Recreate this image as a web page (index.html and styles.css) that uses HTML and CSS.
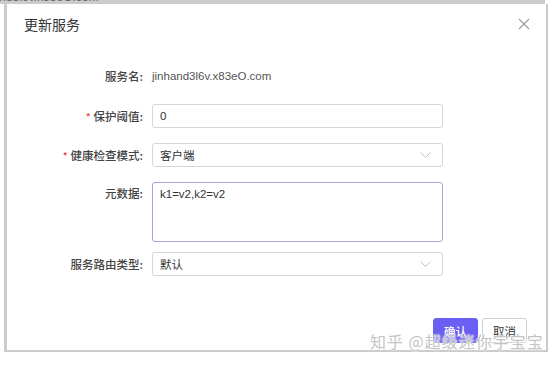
FILE: index.html
```
<!DOCTYPE html>
<html lang="zh-CN">
  <head>
    <meta charset="UTF-8" />
    <meta name="viewport" content="width=device-width, initial-scale=1.0" />
    <title>更新服务</title>
    <link rel="stylesheet" href="styles.css">
  </head>
  <body>
    <div class="shade-top"><span>jinhand3l6v.x83eO.com</span></div>
    <div class="frame">
      <div class="dialog">
        <div class="dialog-header">
          <span class="dialog-title">更新服务</span>
          <svg class="close" width="12" height="12" viewBox="0 0 12 12">
            <path d="M1 1L11 11M11 1L1 11" stroke="#9a9a9a" stroke-width="1.1" fill="none" />
          </svg>
        </div>

        <form class="form">
          <div class="row row-name">
            <label>服务名:</label>
            <span class="value">jinhand3l6v.x83eO.com</span>
          </div>

          <div class="row row-threshold">
            <label><i>*</i>保护阈值:</label>
            <input type="text" value="0" />
          </div>

          <div class="row row-check">
            <label><i>*</i>健康检查模式:</label>
            <div class="select">
              <span>客户端</span>
              <svg width="11" height="6" viewBox="0 0 11 6">
                <path d="M0.5 0.5L5.5 5.5L10.5 0.5" stroke="#bdbdbd" stroke-width="1" fill="none" />
              </svg>
            </div>
          </div>

          <div class="row row-meta">
            <label>元数据:</label>
            <textarea>k1=v2,k2=v2</textarea>
          </div>

          <div class="row">
            <label>服务路由类型:</label>
            <div class="select">
              <span>默认</span>
              <svg width="11" height="6" viewBox="0 0 11 6">
                <path d="M0.5 0.5L5.5 5.5L10.5 0.5" stroke="#bdbdbd" stroke-width="1" fill="none" />
              </svg>
            </div>
          </div>
        </form>

        <div class="dialog-footer">
          <button type="button" class="btn-primary">确认</button>
          <button type="button" class="btn-default">取消</button>
        </div>
      </div>
    </div>

    <div class="watermark">知乎 @超级迷你宇宝宝</div>
  </body>
</html>
```

FILE: styles.css
```
body {
  margin: 0;
  background: #fff;
  font-family: "Liberation Sans", "Noto Sans CJK SC", sans-serif;
  color: #333;
  width: 554px;
  height: 365px;
  overflow: hidden;
  position: relative;
}
.shade-top {
  width: 545px;
  height: 4px;
  background: #cbcbcb;
  overflow: hidden;
}
.shade-top span {
  display: block;
  margin-top: -10px;
  margin-left: -26px;
  font-size: 12px;
  line-height: 14px;
  color: #666;
}
.frame {
  margin-left: 4px;
  width: 539px;
  height: 346px;
  background: #cbcbcb;
  padding: 0 2px 2px 3px;
}
.dialog {
  background: #fff;
  height: 100%;
}
.dialog-header {
  display: flex;
  justify-content: space-between;
  align-items: center;
  padding: 10px 16px 0 17px;
  height: 20px;
}
.dialog-title {
  font-family: "Noto Sans CJK SC", sans-serif;
  font-size: 14px;
  color: #333;
}
.close {
  display: block;
}
.form {
  margin-top: 30px;
}
.row {
  display: grid;
  grid-template-columns: 136px 291px;
  column-gap: 9px;
  align-items: start;
}
.row label {
  text-align: right;
  font-family: "Noto Sans CJK SC", sans-serif;
  font-size: 11.5px;
  font-weight: 500;
  line-height: 24px;
  color: #444;
}
.row label i {
  font-style: normal;
  color: #f0342a;
  margin-right: 3px;
  font-size: 10px;
}
.row-name {
  margin-bottom: 16px;
}
.row-threshold,
.row-check {
  margin-bottom: 14px;
}
.row-meta {
  margin-bottom: 10px;
}
.row-meta label {
  line-height: 22px;
}
.value {
  font-size: 11.5px;
  line-height: 24px;
  color: #555;
}
input,
textarea,
.select {
  box-sizing: border-box;
  width: 291px;
  margin: 0;
  border: 1px solid #d6d6d6;
  border-radius: 3px;
  font-family: "Liberation Sans", "Noto Sans CJK SC", sans-serif;
  font-size: 11.5px;
  color: #333;
  background: #fff;
}
input {
  height: 24px;
  padding: 0 7px;
}
textarea {
  display: block;
  height: 60px;
  padding: 3px 7px;
  line-height: 16px;
  resize: none;
  border-color: #a9a6d6;
}
.select {
  height: 24px;
  display: flex;
  justify-content: space-between;
  align-items: center;
  padding: 0 11px 0 7px;
  font-family: "Noto Sans CJK SC", sans-serif;
}
.dialog-footer {
  display: flex;
  justify-content: flex-end;
  gap: 4px;
  margin-top: 42px;
  padding-right: 19px;
}
.dialog-footer button {
  height: 25px;
  width: 45px;
  padding: 0;
  border-radius: 3px;
  font-family: "Noto Sans CJK SC", sans-serif;
  font-size: 11.5px;
  cursor: pointer;
}
.btn-primary {
  background: #6b5ef2;
  color: #fff;
  font-weight: 500;
  border: 1px solid #6b5ef2;
}
.btn-default {
  background: #fff;
  color: #333;
  border: 1px solid #cfcfcf;
}
.watermark {
  position: absolute;
  left: 370px;
  top: 331px;
  font-family: "Noto Sans CJK SC", sans-serif;
  font-size: 16px;
  letter-spacing: 1px;
  line-height: 20px;
  color: #c4c4c4;
  text-shadow: 0 0 2px #fff, 0 0 2px #fff;
}
```
